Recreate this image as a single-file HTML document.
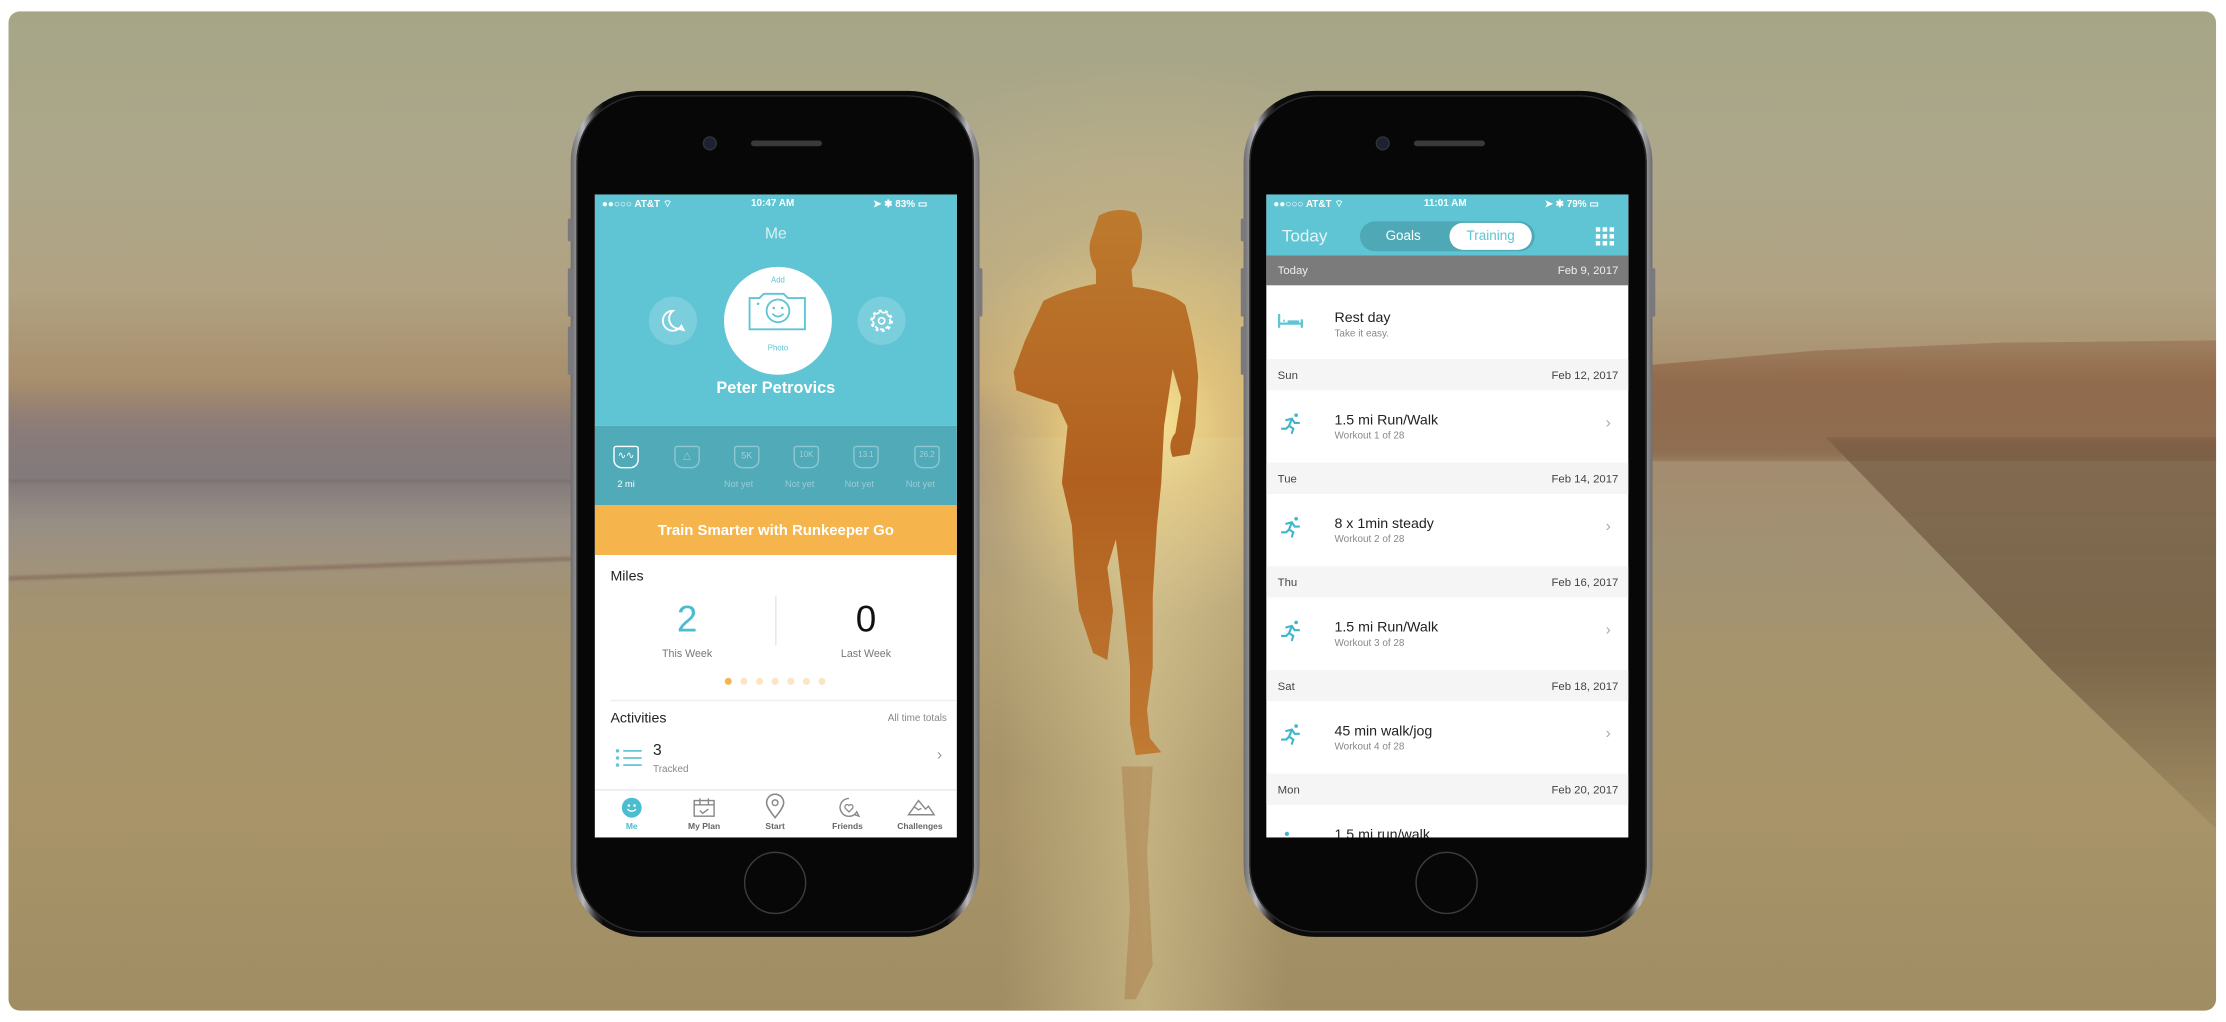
<!DOCTYPE html>
<html><head><meta charset="utf-8">
<style>
*{margin:0;padding:0;box-sizing:border-box}
html,body{width:2226px;height:1022px;overflow:hidden;background:#fff;font-family:"Liberation Sans",sans-serif}
#w{position:absolute;left:0;top:0;width:1568px;height:720px;transform:scale(1.41964,1.41944);transform-origin:0 0}
.card{position:absolute;left:6px;top:8px;width:1555px;height:704px;border-radius:8px;overflow:hidden;
background:linear-gradient(180deg,#a6a687 0%,#ada78a 15%,#b0a282 28%,#a9906e 36%,#a4896c 40%,#a29274 55%,#a6946c 65%,#a89468 80%,#a18d64 100%)}
.abs{position:absolute}
.phone{position:absolute;width:288px;height:596px;border-radius:50px;background:linear-gradient(90deg,#6d6d70,#b9b9bd 3%,#3a3a3c 6%,#0b0b0b 8%,#0b0b0b 92%,#3a3a3c 94%,#b9b9bd 97%,#6d6d70)}
.phone:before{content:"";position:absolute;left:4px;top:3px;right:4px;bottom:3px;border-radius:47px;background:#070707;box-shadow:inset 0 0 0 1px #2a2a2a}
.cam{position:absolute;top:33px;width:8px;height:8px;border-radius:50%;background:#1d2233;box-shadow:0 0 0 1px #333}
.spk{position:absolute;top:35px;width:50px;height:4px;border-radius:2px;background:#3a3a3a}
.home{position:absolute;width:44px;height:44px;border-radius:50%;border:1.5px solid #3c3c3c;bottom:16px}
.btn{position:absolute;width:3px;background:#7a7a7e;border-radius:1px}
.scr{position:absolute;left:17px;top:73px;width:255px;height:453px;background:#fff;overflow:hidden;color:#222}
.sb{position:absolute;left:0;top:0;width:255px;height:13px;font-size:7px;color:#fff;font-weight:bold}
.t{position:absolute;white-space:nowrap}
.teal{background:#5fc4d3}
.hdr{position:absolute;left:0;width:255px;height:22px;background:#f5f5f5;font-size:8px;color:#444}
</style></head><body>
<div id="w">
<div class="card">
 <div class="abs" style="left:450px;top:20px;width:700px;height:600px;background:radial-gradient(ellipse at 50% 45%,rgba(255,236,150,.95) 0%,rgba(245,215,130,.7) 12%,rgba(220,195,130,.35) 30%,rgba(200,180,130,0) 55%)"></div>
 <!-- sea left -->
 <div class="abs" style="left:-20px;top:262px;width:760px;height:150px;filter:blur(3px);background:linear-gradient(90deg,rgba(0,0,0,0) 0,rgba(0,0,0,0) 100%),linear-gradient(180deg,rgba(140,120,115,0) 0%,rgba(135,122,122,.9) 22%,rgba(128,122,124,.95) 45%,rgba(150,142,135,.9) 65%,rgba(160,148,128,.7) 85%,rgba(160,148,120,0) 100%);-webkit-mask-image:linear-gradient(90deg,#000 75%,rgba(0,0,0,0) 100%);mask-image:linear-gradient(90deg,#000 75%,rgba(0,0,0,0) 100%)"></div>
 <div class="abs" style="left:0;top:330px;width:620px;height:2px;background:rgba(120,95,95,.45);filter:blur(1px)"></div>
 <div class="abs" style="left:0;top:398px;width:560px;height:3px;background:rgba(120,90,80,.5);filter:blur(1px);transform:rotate(-2deg);transform-origin:0 0"></div>
 <!-- right hills -->
 <div class="abs" style="left:1140px;top:222px;width:440px;height:95px;filter:blur(4px);background:linear-gradient(180deg,rgba(140,100,72,.3),rgba(140,98,68,.8) 40%,rgba(130,92,64,.6));clip-path:polygon(0 30%,30% 18%,60% 12%,100% 10%,100% 100%,0 100%)"></div>
 <div class="abs" style="left:1180px;top:300px;width:400px;height:300px;filter:blur(10px);background:linear-gradient(180deg,rgba(105,78,55,.55),rgba(95,72,50,.6) 50%,rgba(120,95,65,0));clip-path:polygon(25% 0,100% 0,100% 100%,65% 55%)"></div>
 <div class="abs" style="left:700px;top:300px;width:200px;height:404px;background:linear-gradient(90deg,rgba(230,215,160,0),rgba(230,215,160,.45),rgba(230,215,160,0))"></div>
 <svg class="abs" style="left:0;top:0" width="1555" height="704" viewBox="6 8 1555 704">
  <defs><linearGradient id="rg" x1="0" y1="0" x2="0" y2="1"><stop offset="0" stop-color="#bd7a2e"/><stop offset=".5" stop-color="#b1601f"/><stop offset="1" stop-color="#c07a32"/></linearGradient></defs>
  <path fill="url(#rg)" d="M774 152 Q786 145 800 150 Q806 160 804 172 Q803 182 797 190 L798 202 Q825 205 835 215 Q842 240 844 265 L842 300 L838 320 L826 322 Q822 312 828 305 L832 280 L826 260 L820 300 L818 340 L815 370 L812 420 L812 470 L808 500 L810 520 L818 530 L800 532 L796 510 L796 470 L792 430 L786 380 L780 400 L784 430 L780 465 L770 460 L760 430 L757 400 L755 370 L748 340 L752 300 L745 285 L730 280 L716 275 L714 262 L722 240 L735 212 Q750 204 772 200 L772 190 Q766 180 768 170 Z"/>
  <path fill="rgba(160,95,40,.3)" d="M790 540 L812 540 L808 600 L812 680 L800 704 L792 704 L796 640 Z"/>
 </svg>

 <!-- LEFT PHONE -->
 <div class="phone" style="left:396px;top:56px">
  <div class="btn" style="left:-2px;top:90px;height:16px"></div>
  <div class="btn" style="left:-2px;top:125px;height:34px"></div>
  <div class="btn" style="left:-2px;top:166px;height:34px"></div>
  <div class="btn" style="right:-2px;top:125px;height:34px"></div>
  <div class="cam" style="left:94px"></div><div class="spk" style="left:127px"></div>
  <div class="home" style="left:122px"></div>
  <div class="scr">
   <div class="teal abs" style="left:0;top:0;width:255px;height:163px"></div>
   <div class="sb"><span class="t" style="left:5px;top:3px">●●○○○ AT&amp;T ︎⌔</span><span class="t" style="left:110px;top:3px">10:47 AM</span><span class="t" style="left:196px;top:3px">➤ ✱ 83% ▭</span></div>
   <div class="t" style="left:0;width:255px;text-align:center;top:22px;font-size:11px;color:#d8f1f5">Me</div>
   <div class="abs" style="left:38px;top:72px;width:34px;height:34px;border-radius:50%;background:rgba(255,255,255,.18)"></div>
   <svg class="abs" style="left:46px;top:80px" width="18" height="18" viewBox="0 0 18 18"><path d="M9 2a7 7 0 1 0 6 10.5l1.5 3-3.5-1A7 7 0 0 1 9 2z" fill="none" stroke="#fff" stroke-width="1.3"/></svg>
   <div class="abs" style="left:185px;top:72px;width:34px;height:34px;border-radius:50%;background:rgba(255,255,255,.18)"></div>
   <svg class="abs" style="left:192px;top:79px" width="20" height="20" viewBox="0 0 20 20"><circle cx="10" cy="10" r="6" fill="none" stroke="#fff" stroke-width="1.3" stroke-dasharray="2.5 1.5"/><circle cx="10" cy="10" r="2.2" fill="none" stroke="#fff" stroke-width="1.2"/><circle cx="10" cy="10" r="7" fill="none" stroke="#fff" stroke-width="2" stroke-dasharray="2 2.4"/></svg>
   <div class="abs" style="left:91px;top:51px;width:76px;height:76px;border-radius:50%;background:#fff"></div>
   <div class="t" style="left:91px;width:76px;text-align:center;top:58px;font-size:5.5px;color:#5fc4d3">Add</div>
   <svg class="abs" style="left:106px;top:67px" width="46" height="32" viewBox="0 0 46 32"><path d="M3 6h7l3-3h14l3 3h12v22H3z" fill="none" stroke="#5fc4d3" stroke-width="1.3"/><circle cx="23" cy="15" r="8" fill="none" stroke="#5fc4d3" stroke-width="1.3"/><circle cx="20" cy="13" r=".9" fill="#5fc4d3"/><circle cx="26" cy="13" r=".9" fill="#5fc4d3"/><path d="M19 17q4 4 8 0" fill="none" stroke="#5fc4d3" stroke-width="1.2"/><circle cx="9" cy="10" r=".9" fill="#5fc4d3"/></svg>
   <div class="t" style="left:91px;width:76px;text-align:center;top:106px;font-size:5.5px;color:#5fc4d3">Photo</div>
   <div class="t" style="left:0;width:255px;text-align:center;top:131px;font-size:11.5px;color:#fff;font-weight:bold">Peter Petrovics</div>
   <div class="abs" style="left:0;top:163px;width:255px;height:56px;background:#51aab8"></div>
   <div class="abs" style="left:13px;top:177px;width:18px;height:16px;border:1.3px solid #fff;border-radius:2px 2px 6px 6px;font-size:7px;color:#fff;text-align:center;line-height:13px">∿∿</div>
   <div class="t" style="left:10px;width:24px;text-align:center;top:201px;font-size:6.5px;color:#fff">2 mi</div>
   <div class="abs" style="left:56px;top:177px;width:18px;height:16px;border:1.3px solid rgba(255,255,255,.35);border-radius:2px 2px 6px 6px;font-size:7px;color:rgba(255,255,255,.4);text-align:center;line-height:13px">△</div>
   <div class="abs" style="left:98px;top:177px;width:18px;height:16px;border:1.3px solid rgba(255,255,255,.35);border-radius:2px 2px 6px 6px;font-size:6.5px;color:rgba(255,255,255,.45);text-align:center;line-height:13px">5K</div>
   <div class="abs" style="left:140px;top:177px;width:18px;height:16px;border:1.3px solid rgba(255,255,255,.35);border-radius:2px 2px 6px 6px;font-size:5.5px;color:rgba(255,255,255,.45);text-align:center;line-height:13px">10K</div>
   <div class="abs" style="left:182px;top:177px;width:18px;height:16px;border:1.3px solid rgba(255,255,255,.35);border-radius:2px 2px 6px 6px;font-size:5.5px;color:rgba(255,255,255,.45);text-align:center;line-height:13px">13.1</div>
   <div class="abs" style="left:225px;top:177px;width:18px;height:16px;border:1.3px solid rgba(255,255,255,.35);border-radius:2px 2px 6px 6px;font-size:5.5px;color:rgba(255,255,255,.45);text-align:center;line-height:13px">26.2</div>
   <div class="t" style="left:91px;top:201px;font-size:6.5px;color:rgba(255,255,255,.4)">Not yet</div>
   <div class="t" style="left:134px;top:201px;font-size:6.5px;color:rgba(255,255,255,.4)">Not yet</div>
   <div class="t" style="left:176px;top:201px;font-size:6.5px;color:rgba(255,255,255,.4)">Not yet</div>
   <div class="t" style="left:219px;top:201px;font-size:6.5px;color:rgba(255,255,255,.4)">Not yet</div>
   <div class="abs" style="left:0;top:219px;width:255px;height:35px;background:#f5b54c"></div>
   <div class="t" style="left:0;width:255px;text-align:center;top:231px;font-size:10.5px;color:#fff;font-weight:bold">Train Smarter with Runkeeper Go</div>
   <div class="t" style="left:11px;top:264px;font-size:10px;color:#222">Miles</div>
   <div class="t" style="left:30px;width:70px;text-align:center;top:284px;font-size:26px;color:#4cbcd0;font-weight:300">2</div>
   <div class="t" style="left:30px;width:70px;text-align:center;top:319px;font-size:7.5px;color:#777">This Week</div>
   <div class="abs" style="left:127px;top:283px;width:1px;height:35px;background:#e6e6e6"></div>
   <div class="t" style="left:156px;width:70px;text-align:center;top:284px;font-size:26px;color:#111">0</div>
   <div class="t" style="left:156px;width:70px;text-align:center;top:319px;font-size:7.5px;color:#777">Last Week</div>
   <svg class="abs" style="left:90px;top:340px" width="80" height="6"><circle cx="4" cy="3" r="2.5" fill="#f5b54c"/><circle cx="15" cy="3" r="2.5" fill="#fbe5c2"/><circle cx="26" cy="3" r="2.5" fill="#fbe5c2"/><circle cx="37" cy="3" r="2.5" fill="#fbe5c2"/><circle cx="48" cy="3" r="2.5" fill="#fbe5c2"/><circle cx="59" cy="3" r="2.5" fill="#fbe5c2"/><circle cx="70" cy="3" r="2.5" fill="#fbe5c2"/></svg>
   <div class="abs" style="left:11px;top:356px;width:244px;height:1px;background:#eee"></div>
   <div class="t" style="left:11px;top:364px;font-size:10px;color:#222">Activities</div>
   <div class="t" style="right:7px;top:366px;font-size:7px;color:#888">All time totals</div>
   <svg class="abs" style="left:14px;top:390px" width="20" height="14"><g fill="#5fc4d3"><circle cx="2" cy="2" r="1.2"/><circle cx="2" cy="7" r="1.2"/><circle cx="2" cy="12" r="1.2"/><rect x="6" y="1.4" width="13" height="1.2"/><rect x="6" y="6.4" width="13" height="1.2"/><rect x="6" y="11.4" width="13" height="1.2"/></g></svg>
   <div class="t" style="left:41px;top:386px;font-size:11px;color:#222">3</div>
   <div class="t" style="left:41px;top:402px;font-size:7px;color:#888">Tracked</div>
   <div class="t" style="left:241px;top:389px;font-size:11px;color:#999">›</div>
   <div class="abs" style="left:0;top:419px;width:255px;height:1px;background:#e8e8e8"></div>
   <div class="abs" style="left:19px;top:425px;width:14px;height:14px;border-radius:50%;background:#4cbcd0"></div>
   <svg class="abs" style="left:19px;top:425px" width="14" height="14"><circle cx="5" cy="5.5" r=".9" fill="#fff"/><circle cx="9" cy="5.5" r=".9" fill="#fff"/><path d="M4 8q3 3 6 0" stroke="#fff" fill="none" stroke-width="1"/></svg>
   <svg class="abs" style="left:69px;top:424px" width="16" height="15"><rect x="1" y="3" width="14" height="11" fill="none" stroke="#888" stroke-width="1"/><path d="M1 6h14M5 5.5v-4M11 5.5v-4M5 10l2 2 4-3" stroke="#888" fill="none" stroke-width="1"/></svg>
   <svg class="abs" style="left:120px;top:422px" width="14" height="18"><path d="M7 17C3 12 1 9 1 6.5a6 6 0 0 1 12 0C13 9 11 12 7 17z" fill="none" stroke="#888" stroke-width="1.1"/><circle cx="7" cy="6.5" r="2" fill="none" stroke="#888" stroke-width="1"/></svg>
   <svg class="abs" style="left:171px;top:424px" width="16" height="15"><path d="M8 1.5a6.3 6.3 0 1 0 5.5 9.5l1.5 3-3-1" fill="none" stroke="#888" stroke-width="1"/><path d="M8 11l-2.5-2.5a1.5 1.5 0 0 1 2.5-2 1.5 1.5 0 0 1 2.5 2z" fill="none" stroke="#888" stroke-width=".9"/></svg>
   <svg class="abs" style="left:220px;top:425px" width="20" height="13"><path d="M1 12L8 2l5 6 2-2 4 6zM5 6.5l3 2 2-1" fill="none" stroke="#888" stroke-width="1"/></svg>
   <div class="t" style="left:6px;width:40px;text-align:center;top:443px;font-size:6px;font-weight:bold;color:#4cbcd0">Me</div>
   <div class="t" style="left:57px;width:40px;text-align:center;top:443px;font-size:6px;font-weight:bold;color:#666">My Plan</div>
   <div class="t" style="left:107px;width:40px;text-align:center;top:443px;font-size:6px;font-weight:bold;color:#666">Start</div>
   <div class="t" style="left:158px;width:40px;text-align:center;top:443px;font-size:6px;font-weight:bold;color:#666">Friends</div>
   <div class="t" style="left:205px;width:48px;text-align:center;top:443px;font-size:6px;font-weight:bold;color:#666">Challenges</div>
  </div>
 </div>

 <!-- RIGHT PHONE -->
 <div class="phone" style="left:870px;top:56px">
  <div class="btn" style="left:-2px;top:90px;height:16px"></div>
  <div class="btn" style="left:-2px;top:125px;height:34px"></div>
  <div class="btn" style="left:-2px;top:166px;height:34px"></div>
  <div class="btn" style="right:-2px;top:125px;height:34px"></div>
  <div class="cam" style="left:94px"></div><div class="spk" style="left:120px"></div>
  <div class="home" style="left:121px"></div>
  <div class="scr" style="left:16px;background:#fff">
   <div class="teal abs" style="left:0;top:0;width:255px;height:43px"></div>
   <div class="sb"><span class="t" style="left:5px;top:3px">●●○○○ AT&amp;T ⌔</span><span class="t" style="left:111px;top:3px">11:01 AM</span><span class="t" style="left:196px;top:3px">➤ ✱ 79% ▭</span></div>
   <div class="t" style="left:11px;top:22px;font-size:12px;color:#e6f7fa">Today</div>
   <div class="abs" style="left:66px;top:19px;width:123px;height:21px;border-radius:11px;background:#4ea8b5"></div>
   <div class="t" style="left:84px;top:24px;font-size:9.5px;color:#fff">Goals</div>
   <div class="abs" style="left:129px;top:20px;width:58px;height:19px;border-radius:10px;background:#fff"></div>
   <div class="t" style="left:129px;width:58px;text-align:center;top:24px;font-size:9.5px;color:#5fc4d3">Training</div>
   <svg class="abs" style="left:232px;top:23px" width="13" height="13"><g fill="#fff"><rect x="0" y="0" width="3.2" height="3.2"/><rect x="4.9" y="0" width="3.2" height="3.2"/><rect x="9.8" y="0" width="3.2" height="3.2"/><rect x="0" y="4.9" width="3.2" height="3.2"/><rect x="4.9" y="4.9" width="3.2" height="3.2"/><rect x="9.8" y="4.9" width="3.2" height="3.2"/><rect x="0" y="9.8" width="3.2" height="3.2"/><rect x="4.9" y="9.8" width="3.2" height="3.2"/><rect x="9.8" y="9.8" width="3.2" height="3.2"/></g></svg>
   <div class="abs" style="left:0;top:43px;width:255px;height:21px;background:#7b7b7b"></div>
   <div class="t" style="left:8px;top:49px;font-size:8px;color:#eee">Today</div>
   <div class="t" style="right:7px;top:49px;font-size:8px;color:#eee">Feb 9, 2017</div>
   <svg class="abs" style="left:8px;top:84px" width="18" height="10"><path d="M1 0v10M17 4v6M1 7h16M4 5h1M7 5.5h8" stroke="#5fc4d3" stroke-width="1.6" fill="none"/></svg>
   <div class="t" style="left:48px;top:82px;font-size:10px;color:#222">Rest day</div>
   <div class="t" style="left:48px;top:95px;font-size:7px;color:#888">Take it easy.</div>

   <div class="hdr" style="top:116px"><span class="t" style="left:8px;top:7px">Sun</span><span class="t" style="right:7px;top:7px">Feb 12, 2017</span></div>
   <div class="hdr" style="top:189px"><span class="t" style="left:8px;top:7px">Tue</span><span class="t" style="right:7px;top:7px">Feb 14, 2017</span></div>
   <div class="hdr" style="top:262px"><span class="t" style="left:8px;top:7px">Thu</span><span class="t" style="right:7px;top:7px">Feb 16, 2017</span></div>
   <div class="hdr" style="top:335px"><span class="t" style="left:8px;top:7px">Sat</span><span class="t" style="right:7px;top:7px">Feb 18, 2017</span></div>
   <div class="hdr" style="top:408px"><span class="t" style="left:8px;top:7px">Mon</span><span class="t" style="right:7px;top:7px">Feb 20, 2017</span></div>

   <svg class="abs" style="left:10px;top:153px" width="16" height="16" viewBox="0 0 16 16"><g fill="none" stroke="#3fb6ca" stroke-width="1.5" stroke-linecap="round"><circle cx="11" cy="2.5" r="1.3" fill="#3fb6ca" stroke="none"/><path d="M4 6l4-1 2 3 3 0M8 5l-2 5 3 2-1 3M6 10l-2 2H1"/></g></svg>
   <div class="t" style="left:48px;top:154px;font-size:10px;color:#222">1.5 mi Run/Walk</div>
   <div class="t" style="left:48px;top:167px;font-size:7px;color:#888">Workout 1 of 28</div>
   <div class="t" style="left:239px;top:155px;font-size:11px;color:#aaa">›</div>

   <svg class="abs" style="left:10px;top:226px" width="16" height="16" viewBox="0 0 16 16"><g fill="none" stroke="#3fb6ca" stroke-width="1.5" stroke-linecap="round"><circle cx="11" cy="2.5" r="1.3" fill="#3fb6ca" stroke="none"/><path d="M4 6l4-1 2 3 3 0M8 5l-2 5 3 2-1 3M6 10l-2 2H1"/></g></svg>
   <div class="t" style="left:48px;top:227px;font-size:10px;color:#222">8 x 1min steady</div>
   <div class="t" style="left:48px;top:240px;font-size:7px;color:#888">Workout 2 of 28</div>
   <div class="t" style="left:239px;top:228px;font-size:11px;color:#aaa">›</div>

   <svg class="abs" style="left:10px;top:299px" width="16" height="16" viewBox="0 0 16 16"><g fill="none" stroke="#3fb6ca" stroke-width="1.5" stroke-linecap="round"><circle cx="11" cy="2.5" r="1.3" fill="#3fb6ca" stroke="none"/><path d="M4 6l4-1 2 3 3 0M8 5l-2 5 3 2-1 3M6 10l-2 2H1"/></g></svg>
   <div class="t" style="left:48px;top:300px;font-size:10px;color:#222">1.5 mi Run/Walk</div>
   <div class="t" style="left:48px;top:313px;font-size:7px;color:#888">Workout 3 of 28</div>
   <div class="t" style="left:239px;top:301px;font-size:11px;color:#aaa">›</div>

   <svg class="abs" style="left:10px;top:372px" width="16" height="16" viewBox="0 0 16 16"><g fill="none" stroke="#3fb6ca" stroke-width="1.5" stroke-linecap="round"><circle cx="11" cy="2.5" r="1.3" fill="#3fb6ca" stroke="none"/><path d="M4 6l4-1 2 3 3 0M8 5l-2 5 3 2-1 3M6 10l-2 2H1"/></g></svg>
   <div class="t" style="left:48px;top:373px;font-size:10px;color:#222">45 min walk/jog</div>
   <div class="t" style="left:48px;top:386px;font-size:7px;color:#888">Workout 4 of 28</div>
   <div class="t" style="left:239px;top:374px;font-size:11px;color:#aaa">›</div>

   <div class="t" style="left:48px;top:446px;font-size:10px;color:#222">1.5 mi run/walk</div>
   <div class="abs" style="left:13px;top:449px;width:3px;height:3px;border-radius:50%;background:#3fb6ca"></div>
  </div>
 </div>
</div>
</div>
</body></html>
